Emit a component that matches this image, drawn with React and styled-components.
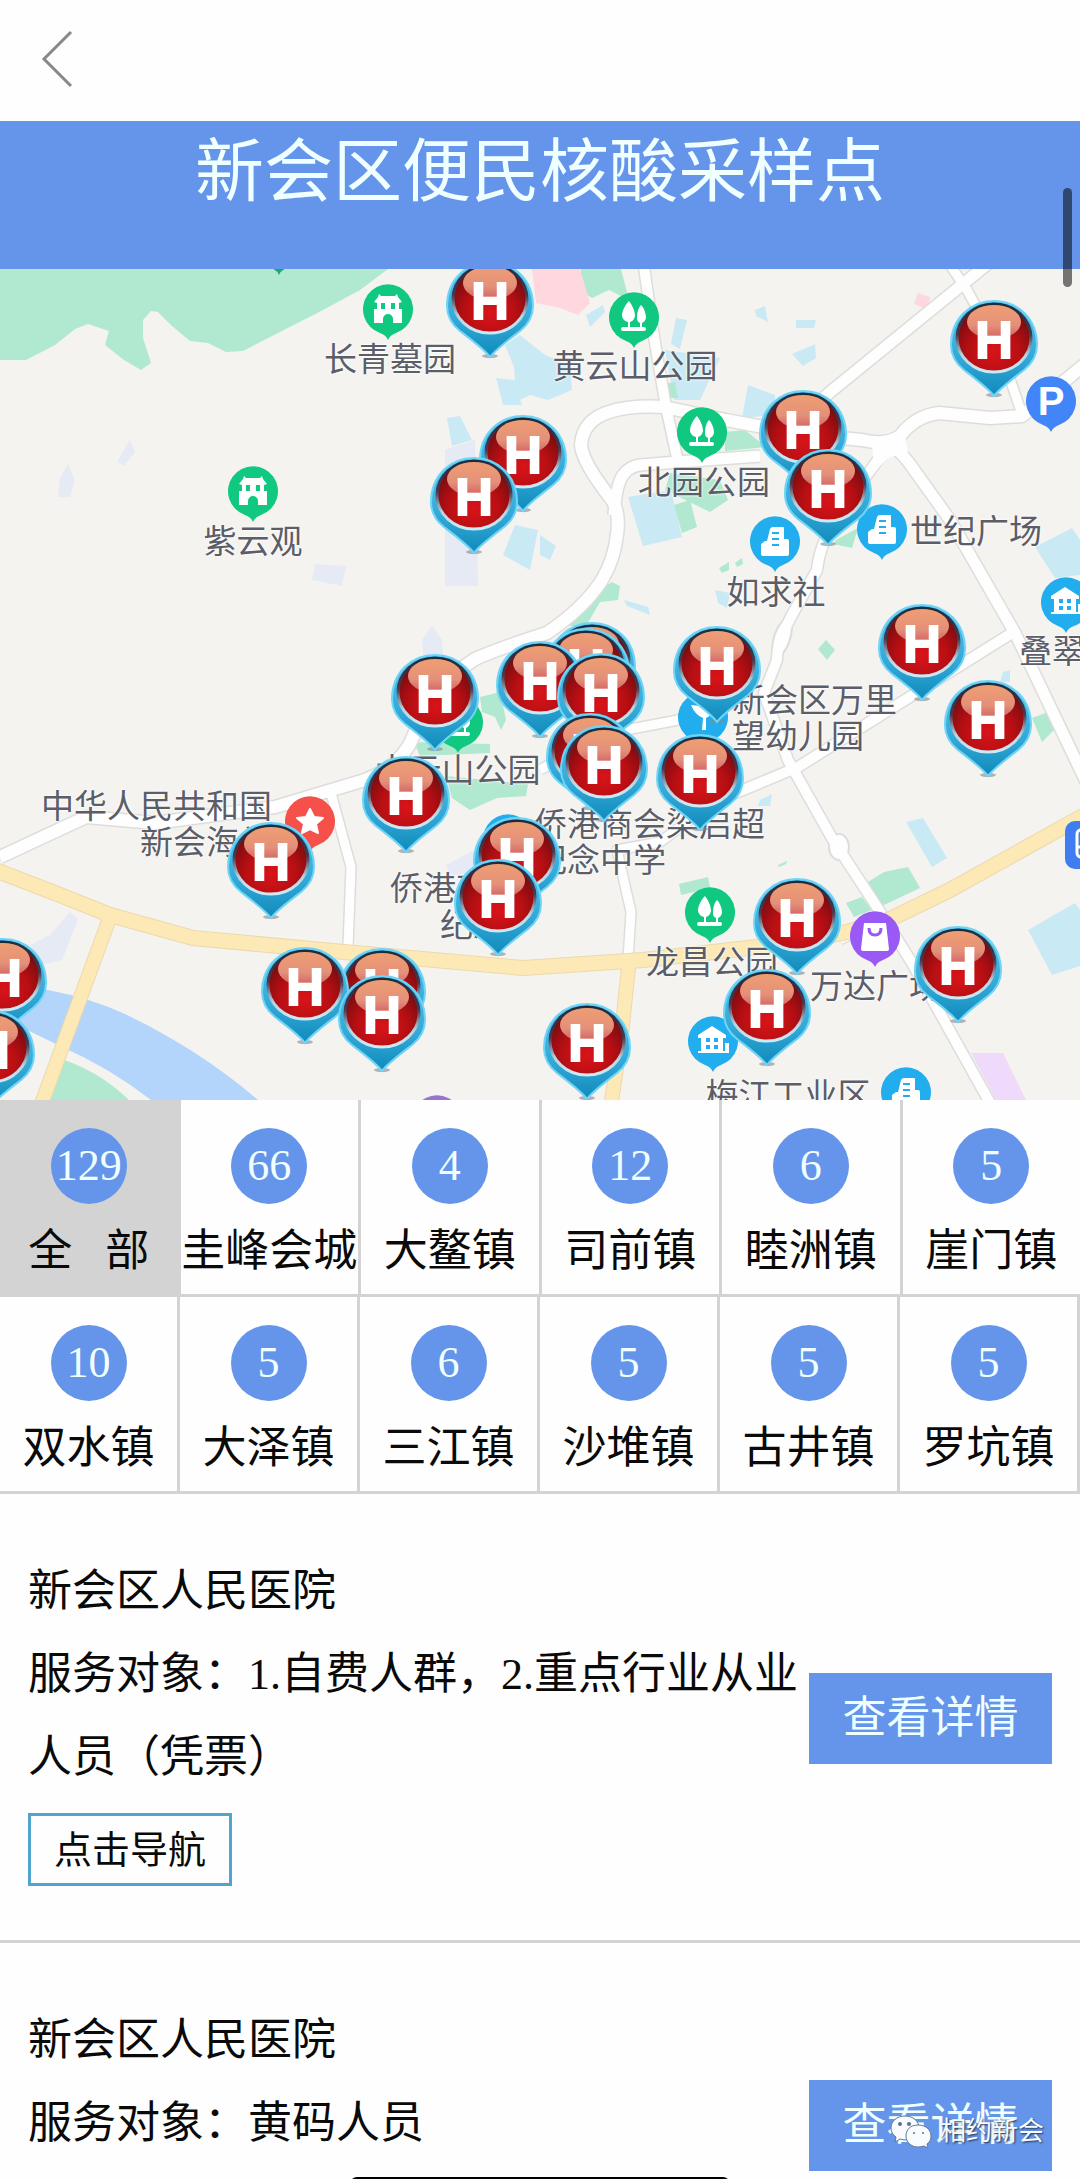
import React from "react";
import styled, { createGlobalStyle } from "styled-components";

const GlobalStyle = createGlobalStyle`
  *, *::before, *::after { box-sizing: border-box; }
  body {
    margin: 0;
    background: #fefefe;
    color: #0a0a0a;
    font-family: "Liberation Serif", "Noto Sans CJK SC", serif;
  }
  button {
    margin: 0;
    padding: 0;
    border: 0;
    background: none;
    color: inherit;
    font: inherit;
    cursor: pointer;
  }
`;

const blue = "#6495ea";
const line = "#d3d3d3";
const MAP_TOP = 269;
const MAP_HEIGHT = 831;
const MAP_WIDTH = 1080;

/* ---------- page frame ---------- */

const Screen = styled.div`
  position: relative;
  display: flex;
  flex-direction: column;
  height: 100vh;
  overflow: hidden;
`;

const NavBar = styled.nav`
  flex: none;
  display: flex;
  align-items: center;
  height: 121px;
  padding: 0 40px 4px;
`;

const BackButton = styled.button`
  display: flex;
  svg { display: block; }
`;

const Content = styled.main`
  flex: 1;
  min-height: 0;
  overflow-y: auto;
  scrollbar-width: none;
`;

const Banner = styled.header`
  height: 148px;
  background: ${blue};
`;

const BannerTitle = styled.h1`
  margin: 0;
  color: #f0ffff;
  font-size: 69px;
  font-weight: 400;
  line-height: 104px;
  text-align: center;
`;

const ScrollThumb = styled.div`
  position: absolute;
  top: 188px;
  right: 8px;
  width: 9px;
  height: 99px;
  border-radius: 5px;
  background: rgba(0, 0, 0, 0.52);
`;

const HomeIndicator = styled.div`
  position: absolute;
  bottom: -12px;
  left: 50%;
  width: 380px;
  height: 14px;
  margin-left: -190px;
  border-radius: 8px;
  background: #000;
`;

const Watermark = styled.div`
  position: absolute;
  right: 36px;
  bottom: 27px;
  display: flex;
  align-items: center;
  gap: 8px;
  color: #f8fcff;
  font-size: 26px;
  line-height: 40px;
  text-shadow: 1px 1px 2px rgba(30, 40, 60, 0.9);
  pointer-events: none;
  svg { display: block; }
`;

/* ---------- map ---------- */

const MapArea = styled.section`
  position: relative;
  height: ${MAP_HEIGHT}px;
  overflow: hidden;
  background: #f4f3ef;
`;

const Terrain = styled.svg`
  display: block;
  width: 100%;
  height: 100%;
`;

const placed = ({ $x, $y }) => `
  position: absolute;
  left: ${($x / MAP_WIDTH) * 100}%;
  top: ${$y - MAP_TOP}px;
`;

const PinButton = styled.button`
  ${placed}
  width: 92px;
  height: 102px;
  margin: -40px 0 0 -46px;
  svg { display: block; }
`;

const PlaceIcon = styled.span`
  ${placed}
  width: 52px;
  height: 58px;
  margin: -26px 0 0 -26px;
  svg { display: block; }
`;

const PlaceLabel = styled.span`
  ${placed}
  margin-top: -3px;
  transform: translate(${(p) => ({ left: "0", right: "-100%" }[p.$align] || "-50%")}, -50%);
  color: #5b5d68;
  font-family: "Noto Sans CJK SC", sans-serif;
  font-size: 33px;
  line-height: 36px;
  text-align: ${(p) => p.$align || "center"};
  white-space: pre;
  text-shadow: 0 0 2px #fff, 0 0 3px #fff;
`;

const roads = [
  { d: "M643 260 L654 337 L666 407 L678 462", w: 10 },
  { d: "M780 430 L726 420 L664 407 Q630 405 609 412 Q583 420 581 445 Q582 462 612 500 Q620 512 617 535 Q614 560 602 580 Q584 608 547 633 Q500 648 475 659 L430 690 L413 737 Q402 765 365 780 L275 807 L155 823 L86 817 L0 857", w: 12 },
  { d: "M614 515 Q616 485 623 475 Q630 466 640 465 L678 462 L760 456", w: 11 },
  { d: "M990 262 L829 393 L790 430", w: 11 },
  { d: "M948 262 L967 290 L1000 350 L1022 414", w: 9 },
  { d: "M820 436 L862 440 Q886 446 900 436 Q915 416 939 413 L990 418 L1022 416 L1090 360", w: 12 },
  { d: "M888 443 Q900 450 912 467 L950 520 L1015 633 L1090 790", w: 11 },
  { d: "M888 446 L867 475 L835 520 Q819 547 817 570 L792 615 Q776 645 777 660 L764 693 L788 760 L833 840 L877 907 L912 963 L994 1110", w: 10 },
  { d: "M1012 633 L798 767 L743 790 L690 808", w: 10 },
  { d: "M540 770 L600 735 L678 720 L720 706", w: 9 },
  { d: "M690 820 L660 842 L617 850 L631 912 L628 960", w: 9 },
  { d: "M331 793 L351 867 L348 947", w: 9 },
  { d: "M840 940 L919 905", w: 8 },
];

const highways = [
  { d: "M-10 868 L60 895 L110 915 L193 938 L344 952 L523 968 L643 960 L757 947 L843 933 L884 922 L950 890 L1090 812", w: 14 },
  { d: "M110 917 L41 1105", w: 13 },
  { d: "M629 962 L622 1030 L611 1105", w: 13 },
];

const areas = [
  ["#b0e8d0", "0,269 388,269 360,290 323,310 243,351 226,352 208,343 190,341 172,326 158,312 151,311 143,320 143,338 151,363 141,370 124,360 105,345 109,331 88,324 75,329 55,345 26,360 0,360"],
  ["#b0e8d0", "581,269 621,269 629,300 609,290 592,298 580,290"],
  ["#ffd7df", "532,269 580,269 590,303 578,315 560,308 536,303"],
  ["#ffd7df", "918,293 930,297 928,310 914,304"],
  ["#c9eaf5", "505,345 520,335 545,355 570,365 572,390 548,400 530,395 520,400 522,405 503,405 496,378 515,380 514,367"],
  ["#c9eaf5", "447,418 460,416 472,440 452,446"],
  ["#e6eaf4", "445,450 475,440 478,586 445,586"],
  ["#c9eaf5", "515,525 538,530 530,570 503,555"],
  ["#c9eaf5", "586,315 603,305 605,312 590,327"],
  ["#c9eaf5", "676,318 687,320 680,349 671,344"],
  ["#c9eaf5", "755,310 765,306 768,322 756,316"],
  ["#c9eaf5", "796,320 816,320 814,328 796,328"],
  ["#c9eaf5", "792,354 815,344 816,358 803,366"],
  ["#c9eaf5", "665,350 720,358 700,400 674,400"],
  ["#b0e8d0", "665,384 675,382 678,398 668,398"],
  ["#c9eaf5", "748,385 775,395 775,415 742,418"],
  ["#b0e8d0", "725,432 745,430 766,447 725,451"],
  ["#b0e8d0", "670,473 720,480 728,500 710,512 665,490"],
  ["#c9eaf5", "628,497 671,490 682,537 643,546"],
  ["#b0e8d0", "674,505 690,500 697,527 682,533"],
  ["#b0e8d0", "836,540 858,528 852,548 833,544"],
  ["#c9eaf5", "1035,547 1072,528 1080,540 1080,575 1055,578"],
  ["#c9eaf5", "540,535 556,546 550,560 540,555"],
  ["#b0e8d0", "568,626 585,600 612,582 620,586 618,600 600,602 586,626"],
  ["#b0e8d0", "719,568 729,562 729,570 722,573"],
  ["#b0e8d0", "735,563 742,558 743,564 737,567"],
  ["#c9eaf5", "715,590 730,593 727,608 718,603"],
  ["#c9eaf5", "624,600 648,607 650,615 627,606"],
  ["#b0e8d0", "818,649 826,640 835,650 827,660"],
  ["#e6eaf4", "60,478 68,464 75,480 70,497 58,497"],
  ["#e6eaf4", "117,462 130,440 135,452 124,466"],
  ["#e6eaf4", "315,564 346,566 342,586 312,580"],
  ["#e6eaf4", "422,640 432,626 442,640 443,655 423,655"],
  ["#b0e8d0", "480,697 500,692 506,720 501,730 495,717 482,712"],
  ["#b0e8d0", "414,742 490,744 490,753 420,756"],
  ["#b0e8d0", "446,776 528,784 526,796 497,798 470,810 452,798"],
  ["#e6eaf4", "446,865 475,850 483,870 450,876"],
  ["#b0e8d0", "1032,718 1048,712 1056,728 1042,742"],
  ["#c9eaf5", "1003,672 1010,670 1010,682 1000,682"],
  ["#c9eaf5", "906,822 923,818 947,858 932,867"],
  ["#c9eaf5", "760,800 772,794 770,806 758,806"],
  ["#b0e8d0", "868,882 884,872 908,867 920,888 882,906"],
  ["#b0e8d0", "846,903 862,897 872,910 854,917"],
  ["#b0e8d0", "679,884 708,877 710,888 681,895"],
  ["#b0e8d0", "778,865 787,861 786,864 779,867"],
  ["#c9eaf5", "1028,930 1075,903 1080,910 1080,966 1052,975"],
  ["#efdafc", "971,1053 1003,1053 1026,1100 996,1100"],
  ["#e6eaf4", "30,945 50,935 70,912 78,920 62,960 40,965"],
];

function MapTerrain() {
  return (
    <Terrain viewBox={`0 ${MAP_TOP} ${MAP_WIDTH} ${MAP_HEIGHT}`} preserveAspectRatio="none" aria-hidden="true">
      <defs>
        <radialGradient id="ballRed" cx="50%" cy="70%" r="62%">
          <stop offset="0" stopColor="#d8141a" />
          <stop offset="0.55" stopColor="#b80f13" />
          <stop offset="1" stopColor="#780c10" />
        </radialGradient>
        <linearGradient id="ballShine" x1="0" y1="0" x2="0" y2="1">
          <stop offset="0" stopColor="#ee9e72" />
          <stop offset="0.6" stopColor="#e4907a" />
          <stop offset="1" stopColor="#dc8580" stopOpacity="0.7" />
        </linearGradient>
        <linearGradient id="ballRim" x1="0" y1="0" x2="0" y2="1">
          <stop offset="0" stopColor="#1c2c40" />
          <stop offset="0.45" stopColor="#4a3a50" />
          <stop offset="0.75" stopColor="#b9d3de" />
          <stop offset="1" stopColor="#d0e8f2" />
        </linearGradient>
        <linearGradient id="pinBody" x1="0" y1="0" x2="0" y2="1">
          <stop offset="0" stopColor="#4cc4ee" />
          <stop offset="0.6" stopColor="#33a9d8" />
          <stop offset="1" stopColor="#0f8aba" />
        </linearGradient>
      </defs>
      {areas.map(([fill, points], i) => (
        <polygon key={i} fill={fill} points={points} />
      ))}
      <path
        fill="#b3d5fb"
        d="M0 980 L48 990 Q90 998 125 1014 Q200 1050 258 1100 L151 1100 Q110 1068 62 1047 L21 1027 L0 1018 Z"
      />
      <path fill="#b0e8d0" d="M64 1060 Q100 1072 129 1100 L50 1100 Z" />
      <g fill="none" strokeLinejoin="round">
        {roads.map((r) => (
          <path key={r.d} d={r.d} stroke="#dddddb" strokeWidth={r.w + 3} />
        ))}
        <g fill="#fefefe" stroke="#dddddb" strokeWidth="2">
          <ellipse cx="782" cy="638" rx="8" ry="20" transform="rotate(18 782 638)" />
          <ellipse cx="839" cy="847" rx="10" ry="13" />
        </g>
        {roads.map((r) => (
          <path key={r.d} d={r.d} stroke="#fefefe" strokeWidth={r.w} />
        ))}
        <path d="M872 443 L904 430 L908 452 L888 458 L874 472 Z" fill="#fefefe" />
        {highways.map((r) => (
          <path key={r.d} d={r.d} stroke="#ecd9ad" strokeWidth={r.w + 2} />
        ))}
        {highways.map((r) => (
          <path key={r.d} d={r.d} stroke="#fde9b6" strokeWidth={r.w} />
        ))}
      </g>
    </Terrain>
  );
}

function HospitalPin({ x, y }) {
  return (
    <PinButton type="button" $x={x} $y={y} aria-label="采样点">
      <svg width="92" height="102" viewBox="-46 -40 92 102">
        <ellipse cx="0" cy="57" rx="8" ry="2" fill="#7f8a90" opacity="0.6" />
        <path
          d="M0 58 C-5 51 -17 42 -30 32 C-40 24 -43 15 -43 7 C-43 -19 -24 -37 0 -37 C24 -37 43 -19 43 7 C43 15 40 24 30 32 C17 42 5 51 0 58 Z"
          fill="url(#pinBody)"
          stroke="#6fd4f6"
          strokeWidth="2"
        />
        <ellipse cx="0" cy="0" rx="37" ry="34" fill="url(#ballRed)" stroke="url(#ballRim)" strokeWidth="3" />
        <ellipse cx="0" cy="-16" rx="27" ry="17" fill="url(#ballShine)" />
        <text
          x="0"
          y="20"
          textAnchor="middle"
          fontFamily="Liberation Sans, sans-serif"
          fontWeight="700"
          fontSize="52"
          fill="#fff"
          stroke="#fff"
          strokeWidth="2"
        >
          H
        </text>
      </svg>
    </PinButton>
  );
}

const glyphs = {
  castle: (c) => (
    <>
      <path fill="#fff" d="M-9 -15 L-7 -13 H7 L9 -15 L10 -12 L14 -7 L11 -6 V0 H14 V14 H5 V10 A5 5 0 0 0 -5 10 V14 H-14 V0 H-11 V-6 L-14 -7 L-10 -12 Z" />
      <path fill={c} d="M-7 -6 h4 v6 h-4z M3 -6 h4 v6 h-4z" />
    </>
  ),
  trees: () => (
    <g fill="#fff">
      <path d="M-5 -16 C-1 -11 1 -5 1 -1 Q0 4 -4 5 V10 H-6 V5 Q-11 4 -12 -1 C-12 -6 -9 -12 -5 -16 Z" />
      <path d="M7 -12 C11 -8 12 -2 12 1 Q11 5 8 6 V10 H6 V6 Q3 5 3 1 C3 -4 4 -9 7 -12 Z" />
      <rect x="-13" y="10" width="25" height="4" rx="2" />
    </g>
  ),
  building: (c) => (
    <>
      <path fill="#fff" d="M-2 -14 H8 Q9 -14 9 -13 V-2 H12 Q14 -2 14 0 V13 Q14 15 12 15 H-12 Q-14 15 -14 13 V3 L-10 0 H-8 L-5 -12 Q-4 -14 -2 -14 Z" />
      <path stroke={c} strokeWidth="2" d="M-3 -8 H4 M-3 -2 H4 M-3 4 H4" />
    </>
  ),
  house: (c) => (
    <>
      <path fill="#fff" d="M-1 -15 L13 -6 V-3 H10 V10 H12 V2 H16 V12 H-15 V10 H-12 V-3 H-15 V-6 Z" />
      <path fill={c} d="M-7 -3 h4 v4 h-4z M1 -3 h4 v4 h-4z M-7 4 h4 v4 h-4z M1 4 h4 v4 h-4z" />
    </>
  ),
  bag: (c) => (
    <>
      <path fill="#fff" d="M-11 -13 H11 L14 13 Q14 15 12 15 H-12 Q-14 15 -14 13 Z" />
      <path fill="none" stroke={c} strokeWidth="3" d="M-6 -8 Q-6 -1 0 -1 Q6 -1 6 -8" />
    </>
  ),
  star: () => (
    <path
      fill="#fff"
      stroke="#fff"
      strokeWidth="2"
      strokeLinejoin="round"
      d="M0 -12 L4 -4 L13 -3 L6 3 L8 12 L0 8 L-8 12 L-6 3 L-13 -3 L-4 -4 Z"
    />
  ),
  school: () => <path fill="#fff" d="M-12 -12 Q-8 -2 0 1 L-1 13 H3 V1 L12 -4 L7 -10 Z" />,
  parking: () => (
    <text y="14" textAnchor="middle" fontFamily="Liberation Sans, sans-serif" fontWeight="700" fontSize="40" fill="#fff">
      P
    </text>
  ),
  none: () => null,
};

function Place({ x, y, kind, color }) {
  return (
    <PlaceIcon $x={x} $y={y}>
      <svg width="52" height="58" viewBox="-26 -26 52 58" aria-hidden="true">
        <path d="M0 31 Q-2 26 -8 24 A25 25 0 1 1 8 24 Q2 26 0 31 Z" fill={color} />
        {glyphs[kind](color)}
      </svg>
    </PlaceIcon>
  );
}

const green = "#10c880";
const sky = "#22aeee";

const places = [
  { x: 279, y: 244, kind: "none", color: "#12ad70" },
  { x: 388, y: 309, kind: "castle", color: green },
  { x: 253, y: 491, kind: "castle", color: green },
  { x: 634, y: 317, kind: "trees", color: green },
  { x: 702, y: 432, kind: "trees", color: green },
  { x: 458, y: 722, kind: "trees", color: green },
  { x: 710, y: 912, kind: "trees", color: green },
  { x: 775, y: 541, kind: "building", color: sky },
  { x: 882, y: 529, kind: "building", color: sky },
  { x: 906, y: 1092, kind: "building", color: sky },
  { x: 1051, y: 401, kind: "parking", color: "#4285f8" },
  { x: 1066, y: 602, kind: "house", color: sky },
  { x: 713, y: 1041, kind: "house", color: sky },
  { x: 703, y: 717, kind: "school", color: sky },
  { x: 508, y: 839, kind: "none", color: sky },
  { x: 310, y: 821, kind: "star", color: "#f5504a" },
  { x: 875, y: 936, kind: "bag", color: "#9a58f5" },
  { x: 437, y: 1120, kind: "none", color: "#9873d0" },
];

const labels = [
  { x: 390, y: 360, text: "长青墓园" },
  { x: 253, y: 542, text: "紫云观" },
  { x: 635, y: 367, text: "黄云山公园" },
  { x: 704, y: 483, text: "北园公园" },
  { x: 776, y: 593, text: "如求社" },
  { x: 910, y: 532, text: "世纪广场", align: "left" },
  { x: 1019, y: 652, text: "叠翠", align: "left" },
  { x: 732, y: 719, text: "新会区万里\n望幼儿园", align: "left" },
  { x: 534, y: 843, text: "侨港商会梁启超\n纪念中学", align: "left" },
  { x: 458, y: 771, text: "大云山公园" },
  { x: 712, y: 963, text: "龙昌公园" },
  { x: 810, y: 987, text: "万达广场", align: "left" },
  { x: 788, y: 1096, text: "梅江工业区" },
  { x: 390, y: 889, text: "侨港商", align: "left" },
  { x: 440, y: 926, text: "纪念", align: "left" },
];

const pins = [
  [490, 299], [994, 338], [803, 428], [523, 453], [828, 487], [474, 495],
  [922, 642], [592, 660], [586, 666], [717, 664], [540, 679], [601, 691],
  [435, 692], [988, 718], [590, 751], [604, 763], [700, 772], [406, 794],
  [517, 855], [271, 860], [498, 897], [797, 916], [958, 964], [3, 976],
  [382, 986], [305, 985], [767, 1007], [382, 1013], [587, 1041], [-9, 1048],
];

const RightLabel = styled(PlaceLabel)`
  transform: translate(-100%, -50%);
`;

const StationBadge = styled.span`
  ${placed}
  width: 50px;
  height: 48px;
  margin: -24px 0 0 -25px;
  border-radius: 10px;
  background: #3f7df0;
  svg { display: block; }
`;

function SamplingMap() {
  return (
    <MapArea aria-label="采样点地图">
      <MapTerrain />
      {places.map((p) => (
        <Place key={`${p.x}-${p.y}`} {...p} />
      ))}
      <StationBadge $x={1090} $y={845}>
        <svg width="50" height="48" viewBox="0 0 50 48" aria-hidden="true">
          <rect x="12" y="9" width="26" height="27" rx="4" fill="none" stroke="#fff" strokeWidth="3" />
          <path d="M12 26 H38" stroke="#fff" strokeWidth="3" />
        </svg>
      </StationBadge>
      {labels.map((l) => (
        <PlaceLabel key={l.text} $x={l.x} $y={l.y} $align={l.align}>
          {l.text}
        </PlaceLabel>
      ))}
      <RightLabel $x={272} $y={825} $align="right">{"中华人民共和国\n新会海关"}</RightLabel>
      {pins.map(([x, y]) => (
        <HospitalPin key={`${x}-${y}`} x={x} y={y} />
      ))}
    </MapArea>
  );
}

/* ---------- district filter ---------- */

const DistrictRow = styled.div`
  display: flex;
  border-bottom: 3px solid ${line};
`;

const District = styled.button`
  box-sizing: content-box;
  flex: 1 1 0;
  min-width: 0;
  display: flex;
  flex-direction: column;
  align-items: center;
  padding: 28px 0 0;
  border-right: 3px solid ${line};
  background: ${(p) => (p.$active ? line : "#fefefe")};
  ${(p) => p.$flush && "border-right: 0;"}
`;

const Count = styled.span`
  display: flex;
  align-items: center;
  justify-content: center;
  width: 76px;
  height: 76px;
  border-radius: 50%;
  background: ${blue};
  color: #f0ffff;
  font-size: 44px;
  line-height: 76px;
`;

const DistrictName = styled.span`
  padding-top: 6px;
  font-size: 44px;
  line-height: 84px;
  white-space: nowrap;
`;

const districtRows = [
  [
    [129, "全\u00a0\u00a0\u00a0部"],
    [66, "圭峰会城"],
    [4, "大鳌镇"],
    [12, "司前镇"],
    [6, "睦洲镇"],
    [5, "崖门镇"],
  ],
  [
    [10, "双水镇"],
    [5, "大泽镇"],
    [6, "三江镇"],
    [5, "沙堆镇"],
    [5, "古井镇"],
    [5, "罗坑镇"],
  ],
];

function DistrictFilter() {
  return (
    <div>
      {districtRows.map((row, r) => (
        <DistrictRow key={r}>
          {row.map(([count, name], i) => (
            <District
              key={name}
              type="button"
              $active={r === 0 && i === 0}
              $flush={r === 0 && i === row.length - 1}
            >
              <Count>{count}</Count>
              <DistrictName>{name}</DistrictName>
            </District>
          ))}
        </DistrictRow>
      ))}
    </div>
  );
}

/* ---------- site list ---------- */

const SiteList = styled.ul`
  margin: 0;
  padding: 0;
  list-style: none;
`;

const SiteItem = styled.li`
  display: flex;
  align-items: center;
  padding: 56px 28px 54px;
  border-bottom: 3px solid ${line};
`;

const SiteInfo = styled.div`
  flex: 1;
  min-width: 0;
  font-size: 44px;
  line-height: 83px;
`;

const SiteName = styled.h2`
  margin: 0;
  font-size: 44px;
  font-weight: 400;
`;

const SiteText = styled.p`
  margin: 0 0 14px;
`;

const NavigateButton = styled.button`
  display: block;
  width: 204px;
  height: 73px;
  border: 3px solid #4fa5cd;
  font-size: 38px;
  line-height: 68px;
`;

const DetailButton = styled.button`
  flex: none;
  width: 243px;
  height: 91px;
  background: ${blue};
  color: #f0ffff;
  font-size: 44px;
  line-height: 92px;
`;

const sites = [
  { name: "新会区人民医院", text: "服务对象：1.自费人群，2.重点行业从业人员（凭票）" },
  { name: "新会区人民医院", text: "服务对象：黄码人员" },
];

export default function App() {
  return (
    <Screen>
      <GlobalStyle />
      <NavBar>
        <BackButton type="button" aria-label="返回">
          <svg width="34" height="60" viewBox="0 0 34 60" fill="none" stroke="#888" strokeWidth="3">
            <path d="M31 3 L4 30 L31 57" />
          </svg>
        </BackButton>
      </NavBar>
      <Content>
        <Banner>
          <BannerTitle>新会区便民核酸采样点</BannerTitle>
        </Banner>
        <SamplingMap />
        <DistrictFilter />
        <SiteList>
          {sites.map((s) => (
            <SiteItem key={s.text}>
              <SiteInfo>
                <SiteName>{s.name}</SiteName>
                <SiteText>{s.text}</SiteText>
                <NavigateButton type="button">点击导航</NavigateButton>
              </SiteInfo>
              <DetailButton type="button">查看详情</DetailButton>
            </SiteItem>
          ))}
        </SiteList>
      </Content>
      <ScrollThumb />
      <HomeIndicator />
      <Watermark>
        <svg width="42" height="36" viewBox="0 0 42 36" aria-hidden="true">
          <g fill="#f8fcff" stroke="#667799" strokeWidth="1">
            <path d="M15 2 C7 2 1 7 1 14 C1 18 3 21 6 23 L5 28 L10 25 Q13 26 16 26 C24 25 29 20 29 14 C29 7 23 2 15 2 Z" />
            <path d="M28 11 C20 11 16 16 16 22 C16 28 21 33 28 33 Q31 33 34 32 L38 34 L37 30 C40 28 41 25 41 22 C41 16 36 11 28 11 Z" />
          </g>
          <g fill="#5b6f95">
            <circle cx="10" cy="10" r="2" />
            <circle cx="19" cy="10" r="2" />
            <circle cx="24" cy="19" r="1" />
            <circle cx="33" cy="19" r="1" />
          </g>
        </svg>
        <span>相约新会</span>
      </Watermark>
    </Screen>
  );
}
